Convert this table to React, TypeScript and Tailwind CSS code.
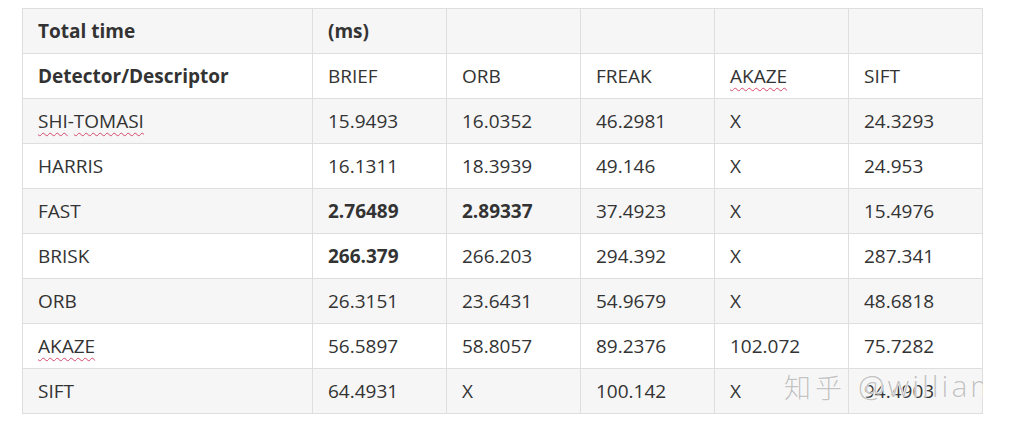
import React from 'react';

const COLS = ['BRIEF', 'ORB', 'FREAK', 'AKAZE', 'SIFT'];

type Cell = { v: string; b?: boolean };

const ROWS: { name: React.ReactNode; cells: Cell[] }[] = [
  {
    name: (
      <>
        <Typo>SHI</Typo>-<Typo>TOMASI</Typo>
      </>
    ),
    cells: [{ v: '15.9493' }, { v: '16.0352' }, { v: '46.2981' }, { v: 'X' }, { v: '24.3293' }],
  },
  { name: 'HARRIS', cells: [{ v: '16.1311' }, { v: '18.3939' }, { v: '49.146' }, { v: 'X' }, { v: '24.953' }] },
  { name: 'FAST', cells: [{ v: '2.76489', b: true }, { v: '2.89337', b: true }, { v: '37.4923' }, { v: 'X' }, { v: '15.4976' }] },
  { name: 'BRISK', cells: [{ v: '266.379', b: true }, { v: '266.203' }, { v: '294.392' }, { v: 'X' }, { v: '287.341' }] },
  { name: 'ORB', cells: [{ v: '26.3151' }, { v: '23.6431' }, { v: '54.9679' }, { v: 'X' }, { v: '48.6818' }] },
  { name: <Typo>AKAZE</Typo>, cells: [{ v: '56.5897' }, { v: '58.8057' }, { v: '89.2376' }, { v: '102.072' }, { v: '75.7282' }] },
  { name: 'SIFT', cells: [{ v: '64.4931' }, { v: 'X' }, { v: '100.142' }, { v: 'X' }, { v: '94.4903' }] },
];

function Typo({ children }: { children: React.ReactNode }) {
  return (
    <span className="underline decoration-wavy decoration-[#d9486b] decoration-1 underline-offset-[4px]">
      {children}
    </span>
  );
}

const td = 'h-[45px] border border-[#dedede] pl-[15px] pr-2 align-middle whitespace-nowrap';

export default function App() {
  return (
    <div className="bg-white w-[1010px] h-[431px] pt-2 pl-[22px] font-['Open_Sans',sans-serif] text-[19px] text-[#333333]">
      <div className="relative w-[961px] overflow-hidden">
        <table className="w-[960px] table-fixed border-collapse">
          <colgroup>
            <col className="w-[290px]" />
            <col className="w-[134px]" />
            <col className="w-[134px]" />
            <col className="w-[134px]" />
            <col className="w-[134px]" />
            <col className="w-[134px]" />
          </colgroup>
          <tbody>
            <tr className="bg-[#f6f6f6]">
              <td className={`${td} font-bold`}>Total time</td>
              <td className={`${td} font-bold`}>(ms)</td>
              <td className={td} />
              <td className={td} />
              <td className={td} />
              <td className={td} />
            </tr>
            <tr className="bg-white">
              <td className={`${td} font-bold`}>Detector/Descriptor</td>
              {COLS.map((c) => (
                <td key={c} className={td}>
                  {c === 'AKAZE' ? <Typo>{c}</Typo> : c}
                </td>
              ))}
            </tr>
            {ROWS.map((r, i) => (
              <tr key={i} className={i % 2 === 0 ? 'bg-[#f6f6f6]' : 'bg-white'}>
                <td className={td}>{r.name}</td>
                {r.cells.map((c, j) => (
                  <td key={j} className={`${td} ${c.b ? 'font-bold' : ''}`}>
                    {c.v}
                  </td>
                ))}
              </tr>
            ))}
          </tbody>
        </table>
        <div className="absolute left-[762px] top-[363px] flex items-center gap-[12px] whitespace-nowrap text-[#c2c2c2] [text-shadow:0_0_2px_#ffffff,0_0_1px_#ffffff,0_0_1px_#ffffff]">
          <span className="font-['Noto_Sans_CJK_SC',sans-serif] text-[27px] leading-none tracking-[4px] font-light">知乎</span>
          <span className="font-['Open_Sans',sans-serif] text-[30px] leading-none font-light tracking-[3px]">@william</span>
        </div>
      </div>
    </div>
  );
}
